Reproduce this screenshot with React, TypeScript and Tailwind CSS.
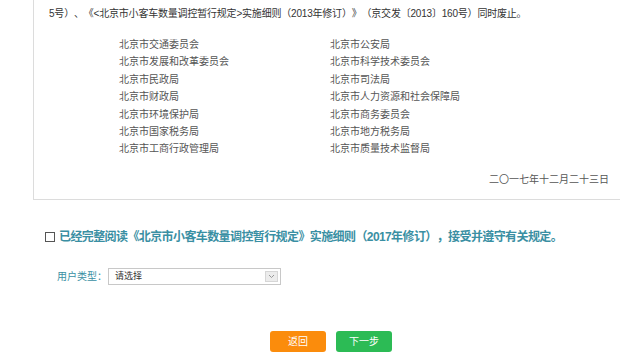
import React from "react";

const left = [
  "北京市交通委员会",
  "北京市发展和改革委员会",
  "北京市民政局",
  "北京市财政局",
  "北京市环境保护局",
  "北京市国家税务局",
  "北京市工商行政管理局",
];
const right = [
  "北京市公安局",
  "北京市科学技术委员会",
  "北京市司法局",
  "北京市人力资源和社会保障局",
  "北京市商务委员会",
  "北京市地方税务局",
  "北京市质量技术监督局",
];

export default function App() {
  const font = { fontFamily: '"Liberation Sans", "Noto Sans CJK SC", sans-serif' };
  return (
    <div className="w-[620px] h-[352px] bg-white overflow-hidden [text-spacing-trim:space-all]" style={font}>
      <div className="ml-[33px] border-l border-b border-[#dcdcdc] pl-[15px] pr-[11px] pt-[5px] pb-[11px]">
        <div className="text-[10px] leading-[17px] text-[#333] whitespace-nowrap tracking-[-0.2px]">
          5号）、《&lt;北京市小客车数量调控暂行规定&gt;实施细则（2013年修订）》（京交发〔2013〕160号）同时废止。
        </div>
        <div className="mt-[14px] pl-[70px] grid grid-cols-[211px_1fr] text-[10px] leading-[17.4px] text-[#555]">
          {left.map((l, i) => (
            <React.Fragment key={i}>
              <div>{l}</div>
              <div>{right[i]}</div>
            </React.Fragment>
          ))}
        </div>
        <div className="mt-[13px] text-right text-[10px] leading-[17px] text-[#555]">二〇一七年十二月二十三日</div>
      </div>

      <div className="mt-[27px] ml-[45px] flex items-center h-[20px]">
        <div className="w-[10px] h-[10px] border border-[#555] bg-white" />
        <div className="ml-[4px] text-[12px] font-bold text-[#3a8fa3] whitespace-nowrap tracking-[-0.6px]">
          已经完整阅读《北京市小客车数量调控暂行规定》实施细则（2017年修订），接受并遵守有关规定。
        </div>
      </div>

      <div className="mt-[21px] ml-[57px] flex items-center">
        <div className="text-[10px] text-[#3a8fa3] w-[51px]">用户类型：</div>
        <div className="w-[173px] h-[17px] border border-[#c8c8c8] flex items-center justify-between pl-[6px] pr-[2px]">
          <span className="text-[9px] text-[#333]">请选择</span>
          <div className="w-[13px] h-[11px] bg-[#ececec] border border-[#d6d6d6] flex items-center justify-center">
            <svg width="7" height="5" viewBox="0 0 7 5">
              <path d="M1 1 L3.5 3.5 L6 1" stroke="#999" strokeWidth="1" fill="none" />
            </svg>
          </div>
        </div>
      </div>

      <div className="mt-[46px] flex justify-center gap-[10px] pl-[42px]">
        <div className="w-[56px] h-[21px] rounded-[3px] bg-[#fb8c0c] text-white text-[10px] flex items-center justify-center">返回</div>
        <div className="w-[56px] h-[21px] rounded-[3px] bg-[#2cbb55] text-white text-[10px] flex items-center justify-center">下一步</div>
      </div>
    </div>
  );
}
